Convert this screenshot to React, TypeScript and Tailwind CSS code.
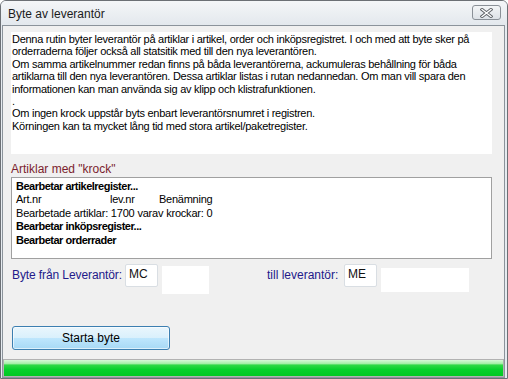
import React from 'react';

const infoLines = [
  'Denna rutin byter leverantör på artiklar i artikel, order och inköpsregistret. I och med att byte sker på',
  'orderraderna följer också all statsitik med till den nya leverantören.',
  'Om samma artikelnummer redan finns på båda leverantörerna, ackumuleras behållning för båda',
  'artiklarna till den nya leverantören. Dessa artiklar listas i rutan nedannedan. Om man vill spara den',
  'informationen kan man använda sig av klipp och klistrafunktionen.',
  '.',
  'Om ingen krock uppstår byts enbart leverantörsnumret i registren.',
  'Körningen kan ta mycket lång tid med stora artikel/paketregister.',
];

const CloseGlyph: React.FC = () => (
  <svg width="13" height="10" viewBox="0 0 13 10">
    <path d="M2 1.5 L11 8.5 M11 1.5 L2 8.5" stroke="#5d6166" strokeWidth="3.2" strokeLinecap="square" />
    <path d="M2 1.5 L11 8.5 M11 1.5 L2 8.5" stroke="#ffffff" strokeWidth="1.4" strokeLinecap="square" />
  </svg>
);

const App: React.FC = () => {
  return (
    <div className="w-[508px] h-[379px] flex flex-col overflow-hidden border border-[#6c7075] rounded-t-[6px] bg-[#e6ebf0] font-['Liberation_Sans',Arial,sans-serif] text-[#111]">
      {/* Title bar */}
      <div className="h-[24px] flex items-start justify-between bg-[linear-gradient(#f4f6f8,#e3e8ed)]">
        <span className="pl-[7px] pt-[6px] text-[12px] leading-[15px] text-[#1b1b1b]">Byte av leverantör</span>
        <button className="mt-[4px] mr-[6px] w-[29px] h-[15px] flex items-center justify-center rounded-[3px] border border-[#8a9097] bg-[linear-gradient(#f3f5f7,#dde2e7)]">
          <CloseGlyph />
        </button>
      </div>

      {/* Client area */}
      <div className="flex-1 ml-[1px] mr-[2px] border border-[#8b939b] bg-[#f0f0f0] flex flex-col">
        {/* Info text */}
        <div className="ml-[8px] mt-[6px] w-[481px] h-[122px] bg-white pl-[1px] pt-[1px] text-[11px] leading-[12.4px] tracking-[-0.27px] text-black">
          {infoLines.map((l, i) => (
            <div key={i} className="whitespace-nowrap">{l}</div>
          ))}
        </div>

        <div className="ml-[8px] mt-[8px] h-[15px] text-[12px] leading-[15px] text-[#7b1e2e]">Artiklar med "krock"</div>

        {/* Collision list */}
        <div className="ml-[8px] w-[481px] h-[82px] bg-white border border-[#a0a0a0] pl-[4px] pt-[2px] text-[11px] leading-[13.4px] text-black">
          <div className="font-bold tracking-[-0.5px]">Bearbetar artikelregister...</div>
          <div className="flex tracking-[-0.25px]">
            <span className="w-[94px]">Art.nr</span>
            <span className="w-[49px]">lev.nr</span>
            <span>Benämning</span>
          </div>
          <div className="tracking-[-0.2px]">Bearbetade artiklar: 1700 varav krockar: 0</div>
          <div className="font-bold tracking-[-0.5px]">Bearbetar inköpsregister...</div>
          <div className="font-bold tracking-[-0.5px]">Bearbetar orderrader</div>
        </div>

        {/* Supplier fields */}
        <div className="mt-[5px] h-[30px] flex items-start">
          <span className="ml-[9px] w-[113px] mt-[4px] text-[12px] leading-[15px] tracking-[-0.1px] text-[#23198a] whitespace-nowrap">Byte från Leverantör:</span>
          <div className="w-[33px] h-[23px] bg-white border border-[#d9dee3] rounded-[2px] pl-[3px] pt-[2px] text-[12px] leading-[14px]">MC</div>
          <div className="ml-[4px] mt-[2px] w-[47px] h-[28px] bg-white" />
          <span className="ml-[58px] w-[77px] mt-[4px] text-[12px] leading-[15px] text-[#23198a] whitespace-nowrap">till leverantör:</span>
          <div className="w-[33px] h-[23px] bg-white border border-[#d9dee3] rounded-[2px] pl-[3px] pt-[2px] text-[12px] leading-[14px]">ME</div>
          <div className="ml-[4px] mt-[4px] w-[88px] h-[24px] bg-white" />
        </div>

        <button className="ml-[9px] mt-[32px] w-[158px] h-[24px] rounded-[3px] border border-[#3c7fb1] bg-[linear-gradient(#eaf6fd_0%,#d9f0fc_50%,#bee6fd_51%,#a7d9f5_100%)] text-[12px] leading-[15px] text-black shadow-[inset_0_0_0_1px_rgba(255,255,255,0.6)]">
          Starta byte
        </button>

        {/* Progress bar */}
        <div className="mt-auto h-[18px] border border-[#b2b2b2] bg-[#e6e6e6]">
          <div className="h-full w-full bg-[linear-gradient(#d8f8d8_0%,#a6efa8_22%,#2fd845_32%,#06d12b_60%,#00c823_100%)]" />
        </div>
      </div>
    </div>
  );
};

export default App;
